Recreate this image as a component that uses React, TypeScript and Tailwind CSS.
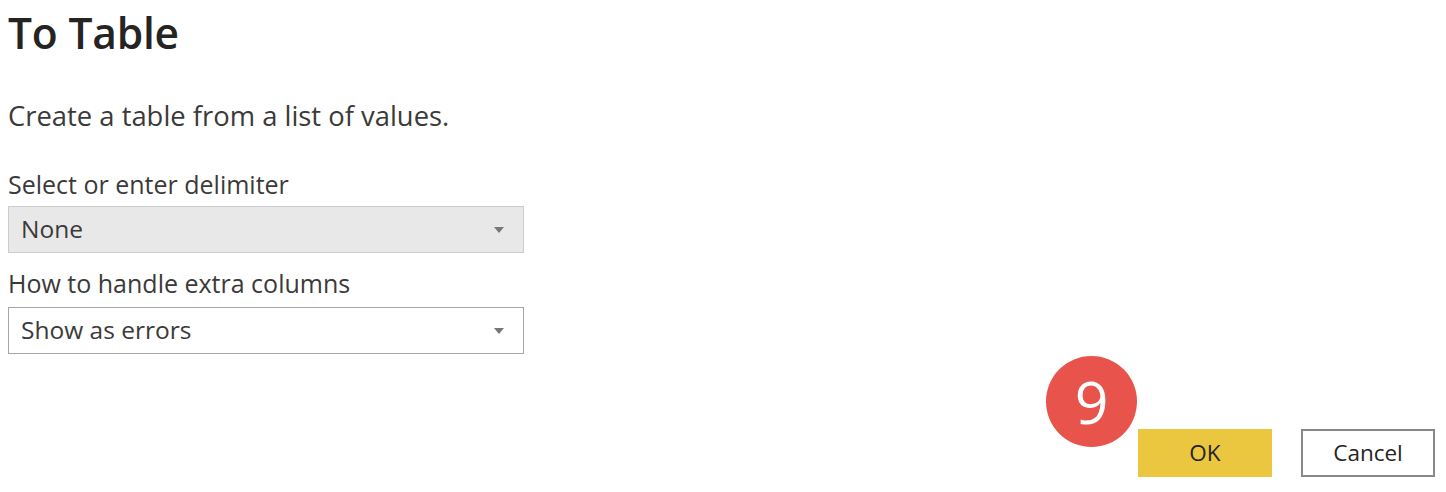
const font = { fontFamily: '"Open Sans", "Noto Sans", sans-serif' }

function Caret() {
    return (
        <svg width="10" height="6" viewBox="0 0 10 6" className="shrink-0">
            <path d="M0 0 L10 0 L5 6 Z" fill="#777777" />
        </svg>
    )
}

interface DropdownProps {
    value: string
    disabled?: boolean
}

function Dropdown({ value, disabled = false }: DropdownProps) {
    return (
        <div
            className={`flex h-[47px] w-[516px] items-center justify-between border pl-[12px] pr-[19px] ${
                disabled ? 'border-[#cccccc] bg-[#e8e8e8]' : 'border-[#a6a6a6] bg-white'
            }`}
        >
            <span className="text-[24.5px] text-[#3b3a39]">{value}</span>
            <Caret />
        </div>
    )
}

export default function App() {
    return (
        <div className="relative h-[492px] w-[1446px] overflow-hidden bg-white" style={font}>
            <div className="flex flex-col pl-[8px]">
                <h1 className="mt-[4px] text-[42.5px] font-semibold leading-[58px] tracking-[-0.2px] text-[#252423]">
                    To Table
                </h1>
                <p className="mt-[36px] text-[27.4px] leading-[36px] text-[#3b3a39]">
                    Create a table from a list of values.
                </p>

                <label className="mt-[34px] text-[25px] leading-[32px] text-[#3b3a39]">
                    Select or enter delimiter
                </label>
                <div className="mt-[6px]">
                    <Dropdown value="None" disabled />
                </div>

                <label className="mt-[14px] text-[25px] leading-[32px] text-[#3b3a39]">
                    How to handle extra columns
                </label>
                <div className="mt-[8px]">
                    <Dropdown value="Show as errors" />
                </div>
            </div>

            <div className="mt-[75px] flex justify-end gap-[29px] pr-[11px]">
                <button className="h-[48px] w-[134px] bg-[#ebc73f] text-[22.5px] text-[#252423]">OK</button>
                <button className="h-[48px] w-[134px] border-2 border-[#8a8886] bg-white text-[22.5px] text-[#252423]">
                    Cancel
                </button>
            </div>

            {/* step marker */}
            <div className="absolute left-[1046px] top-[356px] flex h-[91px] w-[91px] items-center justify-center rounded-full bg-[#e8534b]">
                <span className="text-[59px] leading-none text-white">9</span>
            </div>
        </div>
    )
}
